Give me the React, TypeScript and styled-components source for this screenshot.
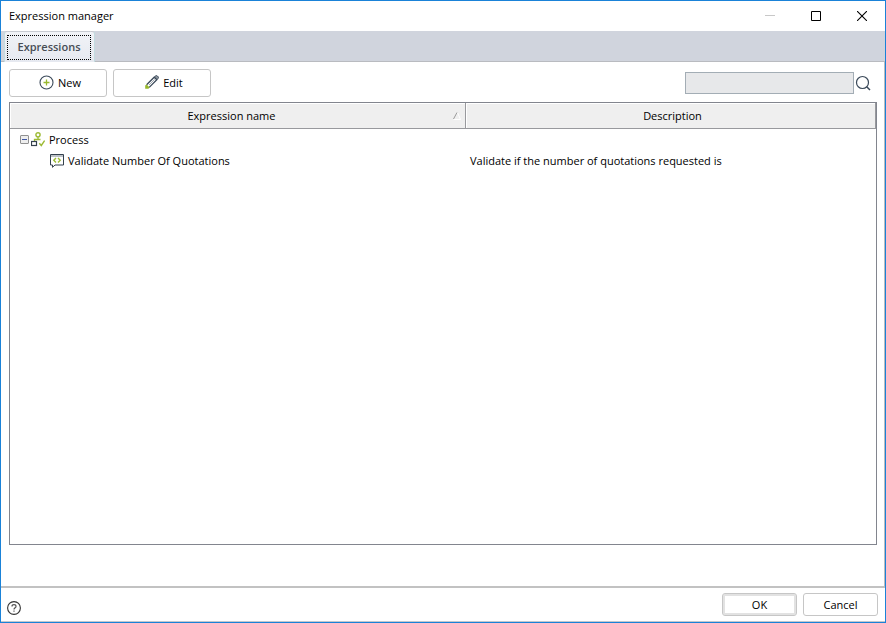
import React, { useState } from "react";
import styled, { createGlobalStyle, css } from "styled-components";

const GlobalStyle = createGlobalStyle`
  *, *::before, *::after { box-sizing: border-box; }
  body { margin: 0; background: #ffffff; }
  body, button, input { font-family: "Open Sans", "Noto Sans", sans-serif; font-size: 11px; color: #000000; }
`;

const Window = styled.main`
  display: flex;
  flex-direction: column;
  min-height: 100vh;
  border: 1px solid #1a82d8;
  background: #ffffff;
`;

const TitleBar = styled.header`
  display: flex;
  align-items: center;
  justify-content: space-between;
  height: 30px;
  padding-left: 8px;
`;

const Title = styled.h1`
  margin: 0;
  font-size: 11px;
  line-height: 16px;
  font-weight: 400;
`;

const WindowControls = styled.div`
  display: flex;
  height: 100%;
`;

const WindowButton = styled.button`
  display: grid;
  place-items: center;
  width: 46px;
  padding: 0 0 1px;
  border: 0;
  background: transparent;
`;

const TabStrip = styled.div`
  display: flex;
  align-items: flex-end;
  height: 31px;
  padding-left: 3px;
  border-bottom: 1px solid #b9bbc0;
  background: #d0d4dd;
`;

const Tab = styled.button`
  height: 31px;
  margin-bottom: -1px;
  padding: 3px 3px 2px 2px;
  border: 1px solid #c3dcdf;
  border-top-color: #c8cbd1;
  border-bottom: 0;
  border-radius: 3px 3px 0 0;
  background: linear-gradient(#f1f3f7, #e6e9f0);
  color: #474d55;
  font-weight: 600;
`;

const TabFocus = styled.span`
  display: flex;
  align-items: center;
  justify-content: center;
  width: 84px;
  height: 25px;
  padding-bottom: 2px;
  border: 1px dotted #000000;
`;

const Pane = styled.section`
  flex: 1;
  display: flex;
  flex-direction: column;
  padding: 7px 7px 41px 8px;
  border-right: 1px solid #b9bbc0;
  border-bottom: 2px solid #c2c2c2;
`;

const Toolbar = styled.div`
  display: flex;
  align-items: center;
  gap: 6px;
  margin-bottom: 5px;
`;

const Button = styled.button<{ $size: "tool" | "dialog"; $default?: boolean }>`
  display: inline-flex;
  align-items: center;
  justify-content: center;
  gap: 4px;
  border: 1px solid #c6c6c6;
  border-radius: 3px;
  background: #ffffff;
  ${({ $size }) =>
    $size === "tool"
      ? css`
          width: 98px;
          height: 28px;
          padding: 0 0 2px 4px;
        `
      : css`
          width: 75px;
          height: 23px;
          padding: 0;
        `}
  ${({ $default }) =>
    $default &&
    css`
      box-shadow: inset 0 0 0 2px #e2e2e2;
    `}
`;

const Search = styled.form`
  display: flex;
  align-items: center;
  gap: 1px;
  margin-left: auto;
  padding-right: 6px;
`;

const SearchInput = styled.input`
  width: 169px;
  height: 22px;
  padding: 0 4px;
  border: 1px solid #a3adb5;
  border-radius: 0;
  background: #e7e8ea;
  outline: 0;
`;

const IconButton = styled.button`
  display: grid;
  place-items: center;
  padding: 0;
  border: 0;
  background: transparent;
`;

const TreeFrame = styled.div`
  flex: 1;
  border: 1px solid #82858e;
`;

const TreeTable = styled.table`
  width: 100%;
  border-collapse: separate;
  border-spacing: 0;
  table-layout: fixed;
`;

const NameColumn = styled.col`
  width: 456px;
`;

const HeaderCell = styled.th`
  height: 26px;
  padding: 0 4px 0 0;
  border-right: 1px solid #98999d;
  border-bottom: 1px solid #98999d;
  background: #efefef;
  box-shadow: inset 1px 1px 0 #ffffff;
  font-weight: 400;

  &:last-child {
    padding: 0 0 0 4px;
  }
`;

const HeaderContent = styled.div`
  display: flex;
  align-items: center;
`;

const HeaderLabel = styled.span`
  flex: 1;
  text-align: center;
`;

const Cell = styled.td`
  height: 21px;
  padding: 0 4px;
  white-space: nowrap;
`;

const TreeItem = styled.div<{ $level: number }>`
  display: flex;
  align-items: center;
  gap: 4px;
  padding-left: ${({ $level }) => ($level === 0 ? 6 : 36)}px;
`;

const TreeGlyphs = styled.span`
  display: flex;
  align-items: center;
  gap: 2px;
`;

const Footer = styled.footer`
  display: flex;
  align-items: center;
  justify-content: space-between;
  height: 34px;
  padding: 0 7px 0 6px;
  border-bottom: 1px solid #c4c8cc;
`;

const HelpButton = styled(IconButton)`
  align-self: flex-end;
  padding-bottom: 6px;
`;

const DialogActions = styled.div`
  display: flex;
  gap: 6px;
`;

const NewIcon = () => (
  <svg width="15" height="15" viewBox="0 0 15 15" fill="none" aria-hidden="true">
    <circle cx="7.5" cy="7.5" r="6.5" stroke="#3b4a5a" strokeWidth="1.1" />
    <path d="M7.5 4.5v6M4.5 7.5h6" stroke="#98b82e" strokeWidth="1.3" />
  </svg>
);

const EditIcon = () => (
  <svg width="14" height="14" viewBox="0 0 14 14" fill="none" aria-hidden="true">
    <path d="M9.2 2.2L10.8 .8Q11.6.2 12.4 1L13.2 1.8Q13.9 2.5 13.2 3.3L11.8 4.8Z" fill="#8b949d" stroke="#3b4a5a" strokeWidth="1" />
    <path d="M1.6 9.8L9.2 2.2L11.8 4.8L4.2 12.4" stroke="#3b4a5a" strokeWidth="1.3" />
    <path d="M4 10L9.6 4.4" stroke="#8b949d" strokeWidth=".8" />
    <path d="M.2 13.8V10.6L1.6 9.4L4.6 12.4L3.4 13.8Z" fill="#98b82e" />
  </svg>
);

const SearchIcon = () => (
  <svg width="16" height="16" viewBox="0 0 16 16" fill="none" aria-hidden="true">
    <circle cx="7.5" cy="7.5" r="6" stroke="#3b4a5a" strokeWidth="1.2" />
    <path d="M11.7 11.7L15 15" stroke="#3b4a5a" strokeWidth="1.5" />
  </svg>
);

const SortIcon = () => (
  <svg width="8" height="8" viewBox="0 0 8 8" fill="none" aria-hidden="true">
    <path d="M4.5.5L7.5 7.5H.5" stroke="#ffffff" />
    <path d="M.5 7L4 .5" stroke="#9a9a9a" />
  </svg>
);

const ToggleIcon = ({ open }: { open: boolean }) => (
  <svg width="9" height="9" viewBox="0 0 9 9" fill="none" aria-hidden="true">
    <rect x=".5" y=".5" width="8" height="8" rx=".5" fill="#eeeeee" stroke="#919191" />
    <path d={open ? "M2 4.5h5" : "M2 4.5h5M4.5 2v5"} stroke="#4057a5" />
  </svg>
);

const ProcessIcon = () => (
  <svg width="14" height="15" viewBox="0 0 14 15" fill="none" aria-hidden="true">
    <circle cx="7" cy="2.8" r="2.1" stroke="#9dbb35" strokeWidth="1.4" />
    <path d="M7 5v2.5M3.5 9V7.5h6" stroke="#9dbb35" strokeWidth="1.3" />
    <path d="M8.3 11.2l2 2.3L13.6 8.6" stroke="#9dbb35" strokeWidth="1.4" />
    <rect x=".5" y="9.5" width="5" height="4" fill="#ffffff" stroke="#34414e" strokeWidth="1.2" />
  </svg>
);

const ExpressionIcon = () => (
  <svg width="14" height="14" viewBox="0 0 14 14" fill="none" aria-hidden="true">
    <path d="M.5.5h13v10.5H5L2.5 13.3V11h-2Z" stroke="#34414e" />
    <path d="M1 2h12" stroke="#7b858f" />
    <path d="M6 4L3.8 6.2 6 8.4M8 4l2.2 2.2L8 8.4" stroke="#9dbb35" strokeWidth="1.4" />
  </svg>
);

const HelpIcon = () => (
  <svg width="14" height="14" viewBox="0 0 14 14" fill="none" aria-hidden="true">
    <circle cx="7" cy="7" r="6.4" stroke="#333333" strokeWidth="1.1" />
    <path d="M5 5.5Q5 3.7 7 3.7T9 5.4C9 6.8 7 6.7 7 8.5M7 9.5v1.3" stroke="#555555" strokeWidth="1.2" />
  </svg>
);

export default function App() {
  const [open, setOpen] = useState(true);
  const [query, setQuery] = useState("");

  return (
    <>
      <GlobalStyle />
      <Window>
        <TitleBar>
          <Title>Expression manager</Title>
          <WindowControls>
            <WindowButton aria-label="Minimize" disabled>
              <svg width="10" height="11"><path d="M0 5.5h10" stroke="#c8c8c8" /></svg>
            </WindowButton>
            <WindowButton aria-label="Maximize">
              <svg width="10" height="10"><path d="M.5.5h9v9h-9Z" fill="none" stroke="#000000" /></svg>
            </WindowButton>
            <WindowButton aria-label="Close">
              <svg width="10" height="10"><path d="M0 0l10 10M10 0L0 10" stroke="#000000" strokeWidth="1.1" /></svg>
            </WindowButton>
          </WindowControls>
        </TitleBar>
        <TabStrip role="tablist">
          <Tab role="tab" id="expressions-tab" aria-selected="true" aria-controls="expressions-panel">
            <TabFocus>Expressions</TabFocus>
          </Tab>
        </TabStrip>
        <Pane role="tabpanel" id="expressions-panel" aria-labelledby="expressions-tab">
          <Toolbar>
            <Button type="button" $size="tool"><NewIcon />New</Button>
            <Button type="button" $size="tool"><EditIcon />Edit</Button>
            <Search role="search" onSubmit={(event) => event.preventDefault()}>
              <SearchInput aria-label="Search" value={query} onChange={(event) => setQuery(event.target.value)} />
              <IconButton aria-label="Run search"><SearchIcon /></IconButton>
            </Search>
          </Toolbar>
          <TreeFrame>
            <TreeTable>
              <colgroup>
                <NameColumn />
                <col />
              </colgroup>
              <thead>
                <tr>
                  <HeaderCell scope="col" aria-sort="ascending">
                    <HeaderContent><HeaderLabel>Expression name</HeaderLabel><SortIcon /></HeaderContent>
                  </HeaderCell>
                  <HeaderCell scope="col">
                    <HeaderContent><HeaderLabel>Description</HeaderLabel></HeaderContent>
                  </HeaderCell>
                </tr>
              </thead>
              <tbody>
                <tr>
                  <Cell colSpan={2}>
                    <TreeItem $level={0}>
                      <TreeGlyphs>
                        <IconButton aria-label="Toggle Process" aria-expanded={open} onClick={() => setOpen(!open)}>
                          <ToggleIcon open={open} />
                        </IconButton>
                        <ProcessIcon />
                      </TreeGlyphs>
                      Process
                    </TreeItem>
                  </Cell>
                </tr>
                {open && (
                  <tr>
                    <Cell>
                      <TreeItem $level={1}><ExpressionIcon />Validate Number Of Quotations</TreeItem>
                    </Cell>
                    <Cell>Validate if the number of quotations requested is</Cell>
                  </tr>
                )}
              </tbody>
            </TreeTable>
          </TreeFrame>
        </Pane>
        <Footer>
          <HelpButton aria-label="Help"><HelpIcon /></HelpButton>
          <DialogActions>
            <Button type="button" $size="dialog" $default>OK</Button>
            <Button type="button" $size="dialog">Cancel</Button>
          </DialogActions>
        </Footer>
      </Window>
    </>
  );
}
